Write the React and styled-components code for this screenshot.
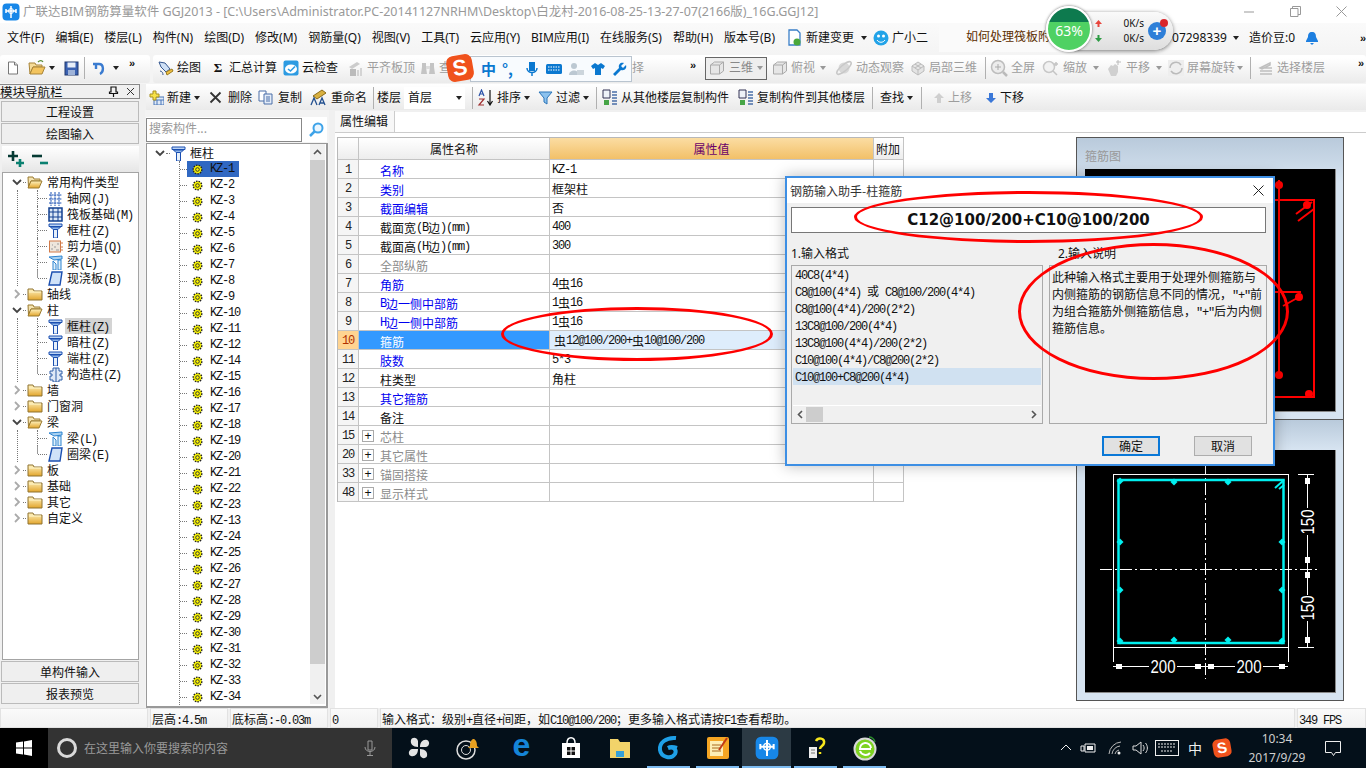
import React from 'react'
import styled, { createGlobalStyle } from 'styled-components'

const GlobalStyle = createGlobalStyle`
	html, body { margin: 0; padding: 0; background: #f0f0f0; }
	* { box-sizing: border-box; }
`

const uiFont = `"Noto Sans", "Noto Sans CJK SC", sans-serif`
const simFont = `"Noto Sans CJK SC", sans-serif`

const Screen = styled.div`
	position: relative;
	width: 1366px;
	height: 768px;
	overflow: hidden;
	display: flex;
	flex-direction: column;
	background: #f0f0f0;
	font: 12px/16px ${simFont};
	color: #111;
`

/* ---------- latin runs set narrow, like the bitmap font ---------- */
const Latin = styled.span`
	font-family: "Liberation Mono", monospace;
	font-size: 12px;
	line-height: 1;
	letter-spacing: -1.2px;
`
const Sim = ({ children }) =>
	String(children)
		.split(/([\x20-\x7e]+)/)
		.map((part, i) => (/^[\x20-\x7e]+$/.test(part) ? <Latin key={i}>{part}</Latin> : part))

/* ---------- icons ---------- */
const Ico = ({ s = 16, h, children }) => (
	<svg width={s} height={h || s} viewBox={`0 0 ${s} ${h || s}`} style={{ flex: 'none', display: 'block' }}>
		{children}
	</svg>
)

const ColumnIcon = () => (
	<Ico s={15}>
		<path d="M1 1h13v2.5H1z" fill="#bcd4f4" stroke="#1b4fb0" />
		<path d="M2.5 4h10l-2.5 2.5H5z" fill="#8fb6ea" stroke="#1b4fb0" />
		<path d="M5.5 6.5h4V15h-4z" fill="#e6f0fb" stroke="#1b4fb0" />
	</Ico>
)
const GearIcon = () => (
	<Ico s={11}>
		<circle cx="5.5" cy="5.5" r="4.3" fill="#f7f400" stroke="#222" strokeWidth="1.4" strokeDasharray="1.5 1.1" />
		<circle cx="5.5" cy="5.5" r="1.8" fill="#fff700" stroke="#333" />
	</Ico>
)
const FolderIcon = ({ open }) => (
	<Ico s={16}>
		<defs>
			<linearGradient id="fold" x1="0" y1="0" x2="0" y2="1">
				<stop offset="0" stopColor="#fff3c0" />
				<stop offset="1" stopColor="#e2a52c" />
			</linearGradient>
		</defs>
		{open ? (
			<>
				<path d="M1 3h5l1 2h6v2H4L1.5 13z" fill="#f5e4b0" stroke="#9a7a30" />
				<path d="M4 7h11l-3 7H1z" fill="url(#fold)" stroke="#9a7a30" />
			</>
		) : (
			<>
				<path d="M1 3h5l1 2h8v9H1z" fill="url(#fold)" stroke="#8f7330" />
				<path d="M2 6h12" stroke="#fff6cc" />
			</>
		)}
	</Ico>
)
const Chevron = ({ down }) => (
	<Ico s={12}>
		{down ? (
			<path d="M2 4l4 4 4-4" fill="none" stroke="#444" strokeWidth="1.8" />
		) : (
			<path d="M4 2l4 4-4 4" fill="none" stroke="#aaa" strokeWidth="1.8" />
		)}
	</Ico>
)
const GridIcon = () => (
	<Ico s={15}>
		<path d="M3 1v14M7 1v14M11 1v14M1 4h13M1 8h13M1 12h13" stroke="#1d52b4" strokeDasharray="2 .6" fill="none" />
	</Ico>
)
const RaftIcon = () => (
	<Ico s={15}>
		<rect x="1" y="1" width="13" height="13" fill="#dce8f6" stroke="#103f90" strokeWidth="1.5" />
		<path d="M5 1v13M10 1v13M1 5h13M1 10h13" stroke="#103f90" />
	</Ico>
)
const WallIcon = () => (
	<Ico s={15}>
		<rect x="1.5" y="2" width="11" height="11" fill="#eee6dc" stroke="#d27a48" />
		<path d="M3 10h2M6 8h2M8 11h3M4 6h1M9 5h2" stroke="#999" />
		<path d="M13 4h2M13 8h2M13 11h2" stroke="#d27a48" />
	</Ico>
)
const BeamIcon = () => (
	<Ico s={15}>
		<path d="M1 2l13-1v3L6 5z" fill="#a9d2f2" stroke="#2c83cf" />
		<path d="M5 6l3 3v6H5zM10 5h3v10h-3z" fill="#dff0fb" stroke="#2c83cf" />
	</Ico>
)
const SlabIcon = () => (
	<Ico s={15}>
		<path d="M4 1h10l-2 13H1z" fill="#cfe2f8" stroke="#1b4fb0" strokeWidth="1.4" />
	</Ico>
)
const StructIcon = () => (
	<Ico s={15}>
		<path d="M5 1h6v3h3v3h-2v2h2v4h-3v2H5v-2H2V9h2V7H2V4h3z" fill="#dfe9f6" stroke="#2f5fa8" />
		<path d="M8 1v14" stroke="#2f5fa8" />
	</Ico>
)
const PlusBox = styled.span`
	flex: none;
	width: 12px;
	height: 12px;
	margin: -2px 6px 0 3px;
	border: 1px solid #aaa;
	background: #fff;
	font: 12px/10px "Liberation Sans", sans-serif;
	text-align: center;
	color: #111;
`
const NewDocIcon = () => (
	<Ico s={14}>
		<path d="M2.5 1h6l3 3v9h-9z" fill="#fff" stroke="#777" />
		<path d="M8.5 1v3h3" fill="#ddd" stroke="#777" />
	</Ico>
)
const OpenIcon = () => (
	<Ico s={18}>
		<path d="M1 4h6l1 2h6v2H5l-3 7z" fill="#f5dc98" stroke="#a88438" />
		<path d="M5 8h12l-3 7H2z" fill="#f3c45e" stroke="#a88438" />
		<path d="M10 3c2-2 4-1.5 5 0" fill="none" stroke="#5a8f3a" strokeWidth="1.3" />
	</Ico>
)
const SaveIcon = () => (
	<Ico s={15}>
		<rect x="1" y="1" width="13" height="13" fill="#3b62b2" stroke="#20386f" />
		<rect x="3.5" y="1.5" width="8" height="5" fill="#e8eef8" />
		<rect x="4" y="9" width="7" height="5" fill="#9fb3d8" />
	</Ico>
)
const UndoIcon = () => (
	<Ico s={14}>
		<path d="M4 2v6M1 3h6c5 0 5 8 1 10" fill="none" stroke="#3a7bd0" strokeWidth="2.4" />
	</Ico>
)
const BrushIcon = () => (
	<Ico s={17}>
		<path d="M2 2l6 1 5 6-4 3-5-5z" fill="#cfe0f5" stroke="#35578f" />
		<path d="M9 12l6-3 1 2-6 4z" fill="#f0c040" stroke="#9a7a20" />
		<path d="M3 11c2 0 3 2 3 4" stroke="#35578f" fill="none" />
	</Ico>
)
const CloudCheckIcon = () => (
	<Ico s={16}>
		<rect x=".5" y=".5" width="15" height="15" rx="2" fill="#2d9be2" />
		<ellipse cx="8" cy="9" rx="6" ry="4.5" fill="#fff" />
		<path d="M5 9l2.5 2L12 6.5" fill="none" stroke="#2d9be2" strokeWidth="1.6" />
	</Ico>
)
const GrayBlocksIcon = () => (
	<Ico s={17}>
		<path d="M2 7l8-5 3 2-8 5z" fill="#ccc" />
		<path d="M3 9h6v7H3z" fill="#bbb" />
		<path d="M10 10h2v6h-2zM13 8h2v8h-2z" fill="#d4d4d4" />
	</Ico>
)
const BinocIcon = () => (
	<Ico s={16}>
		<path d="M2 3h4v4l1 7H1l1-7zM10 3h4v4l1 7H9l1-7z" fill="#c4c4c4" />
		<path d="M6 6h4v3H6z" fill="#ddd" />
	</Ico>
)
const CubeIcon = () => (
	<Ico s={16}>
		<path d="M1.5 5l4-3h9v9l-4 3h-9z" fill="#e6e6e6" stroke="#aaa" />
		<path d="M1.5 5h9v9M10.5 5l4-3" fill="none" stroke="#aaa" />
	</Ico>
)
const OrbitIcon = () => (
	<Ico s={18}>
		<circle cx="9" cy="9" r="5.5" fill="#d8d8d8" />
		<ellipse cx="9" cy="9" rx="9" ry="3" transform="rotate(-40 9 9)" fill="none" stroke="#c8c8c8" strokeWidth="1.5" />
	</Ico>
)
const PartCubeIcon = () => (
	<Ico s={16}>
		<path d="M2 6l6-4 6 4v5l-6 4-6-4z" fill="#e4e4e4" stroke="#bbb" />
		<path d="M2 6l6 4 6-4M8 10v5M5 4l6 4M5 8l6-4" fill="none" stroke="#bbb" />
	</Ico>
)
const ZoomGlassIcon = () => (
	<Ico s={18}>
		<circle cx="8" cy="8" r="6.5" fill="#ececec" stroke="#bdbdbd" strokeWidth="1.5" />
		<path d="M5 8h6M8 5v6" stroke="#aaa" />
		<path d="M13 13l4 4" stroke="#bbb" strokeWidth="2.5" />
	</Ico>
)
const ZoomPlainIcon = () => (
	<Ico s={18}>
		<circle cx="7" cy="8" r="5.5" fill="#f2f2f2" stroke="#c8c8c8" strokeWidth="1.5" />
		<path d="M11 12l4 4M14 3v4M12 5h4" stroke="#c4c4c4" strokeWidth="1.5" />
	</Ico>
)
const HandIcon = () => (
	<Ico s={18}>
		<path d="M3 10l3-4 2 1 2-2 3 2v6l-2 4H6z" fill="#d0d0d0" />
		<path d="M13 1v5M11 3h5" stroke="#bbb" />
	</Ico>
)
const RotateIcon = () => (
	<Ico s={18}>
		<rect x="1" y="1" width="16" height="16" fill="#eee" />
		<path d="M3 9a6 6 0 0 1 11-3M15 9a6 6 0 0 1-11 3" fill="none" stroke="#bbb" strokeWidth="1.5" />
	</Ico>
)
const FloorsIcon = () => (
	<Ico s={16}>
		<path d="M2 8l10-5v2L4 9zM2 8h12M2 11h12M2 14h12" stroke="#bfbfbf" strokeWidth="1.5" fill="none" />
	</Ico>
)
const NewItemIcon = () => (
	<Ico s={15}>
		<rect x="5" y="7" width="10" height="8" fill="#dfe9f6" stroke="#4a76b8" />
		<path d="M5 10h10M8 10v5M12 10v5" stroke="#4a76b8" />
		<path d="M1 4h3V1h3v3h3v3H7v3H4V7H1z" fill="#f7e24a" stroke="#a89020" />
	</Ico>
)
const CrossIcon = () => (
	<Ico s={13}>
		<path d="M1.5 1.5l10 10M11.5 1.5l-10 10" stroke="#333" strokeWidth="1.8" />
	</Ico>
)
const CopyIcon = () => (
	<Ico s={15}>
		<path d="M1 1h7v10H1z" fill="#fff" stroke="#4a6fa8" />
		<path d="M6 4h8v10H6z" fill="#e4ecf8" stroke="#4a6fa8" />
		<path d="M8 7h4M8 9h4M8 11h4" stroke="#4a6fa8" />
	</Ico>
)
const RenameIcon = () => (
	<Ico s={17}>
		<path d="M3 7l9-6 4 3-9 6z" fill="#d8b040" stroke="#8a6a18" />
		<path d="M1 16l3-7 3 7M9 16l3-7 3 7M10 14h4" fill="none" stroke="#23508f" strokeWidth="1.3" />
	</Ico>
)
const SortIcon = () => (
	<Ico s={17}>
		<path d="M2 7l2.5-6L7 7M3 5h3" fill="none" stroke="#2a52a8" strokeWidth="1.2" />
		<path d="M2 10h5l-5 6h5" fill="none" stroke="#a03030" strokeWidth="1.2" />
		<path d="M13 1v14M10.5 12l2.5 4 2.5-4" fill="none" stroke="#111" strokeWidth="1.2" />
	</Ico>
)
const FunnelIcon = () => (
	<Ico s={15}>
		<path d="M1 2h13L9 8v6l-3-2V8z" fill="#8cc2ee" stroke="#2a74b8" />
	</Ico>
)
const CopyFloorIcon = () => (
	<Ico s={17}>
		<path d="M2 1h7v8H2z" fill="#eef2f8" stroke="#335" />
		<path d="M3 11h5v5H3z" fill="#47a547" />
		<path d="M11 3h5M11 6h5M11 9h5M11 12h5M11 15h5" stroke="#4a6fa8" strokeWidth="1.5" />
	</Ico>
)
const ArrowUpIcon = ({ color }) => (
	<Ico s={12}>
		<path d="M6 1l5 5H8v5H4V6H1z" fill={color} />
	</Ico>
)
const ArrowDownIcon = ({ color }) => (
	<Ico s={12}>
		<path d="M6 11L1 6h3V1h4v5h3z" fill={color} />
	</Ico>
)
const MagnifierIcon = () => (
	<Ico s={16}>
		<circle cx="10" cy="6" r="4.5" fill="#eaf6ff" stroke="#3ea3e8" strokeWidth="2" />
		<path d="M6.5 9.5L2 14" stroke="#3ea3e8" strokeWidth="2.5" />
	</Ico>
)
const PinIcon = () => (
	<Ico s={11}>
		<path d="M3 1h5v5h1.5v1.5h-8V6H3zM5.500 7.5V11" fill="none" stroke="#111" strokeWidth="1.2" />
	</Ico>
)
const SmallX = () => (
	<Ico s={9}>
		<path d="M1 1l7 7M8 1L1 8" stroke="#333" />
	</Ico>
)
const ExpandAllIcon = () => (
	<Ico s={18}>
		<path d="M1 6h10M6 1v10" stroke="#053a33" strokeWidth="2.6" />
		<path d="M9 13h8M13 9v8" stroke="#0a8070" strokeWidth="2.6" />
	</Ico>
)
const CollapseAllIcon = () => (
	<Ico s={18}>
		<path d="M1 6h10" stroke="#053a33" strokeWidth="2.6" />
		<path d="M9 13h8" stroke="#0a8070" strokeWidth="2.6" />
	</Ico>
)
const AppLogo = ({ s = 18 }) => (
	<svg width={s} height={s} viewBox="0 0 18 18" style={{ flex: 'none', display: 'block' }}>
		<rect x=".5" y=".5" width="17" height="17" rx="4" fill="#1787e8" />
		<path d="M9 3v12M4 8h10M4 6v4M14 6v4" stroke="#fff" strokeWidth="1.5" fill="none" />
		<circle cx="9" cy="8" r="2.5" fill="none" stroke="#fff" />
	</svg>
)
const DocPlusIcon = () => (
	<Ico s={17}>
		<path d="M3 1h8l3 3v12H3z" fill="#fff" stroke="#3a7fc8" strokeWidth="1.3" />
		<circle cx="11" cy="13" r="3.5" fill="#4aa83a" />
	</Ico>
)
const MascotIcon = () => (
	<Ico s={16}>
		<circle cx="8" cy="8" r="7.5" fill="#22a3e8" />
		<circle cx="5.5" cy="6" r="1.5" fill="#fff" />
		<circle cx="10.5" cy="6" r="1.5" fill="#fff" />
		<path d="M4 10c2 3 6 3 8 0" stroke="#fff" fill="none" />
	</Ico>
)
const BellIcon = () => (
	<Ico s={14}>
		<path d="M7 1c3 0 4 2 4 5l2 4v1H1v-1l2-4c0-3 1-5 4-5z" fill="#1d7fe0" />
		<path d="M5 12h4l-2 2z" fill="#1d7fe0" />
	</Ico>
)

/* ---------- title bar ---------- */
const TitleBar = styled.div`
	height: 23px;
	flex: none;
	display: flex;
	align-items: center;
	padding-left: 2px;
	background: #fff;
`
const TitleText = styled.span`
	margin-left: 3px;
	font: 12.5px/23px ${uiFont};
	color: #999;
	white-space: nowrap;
`
const WinButtons = styled.div`
	margin-left: auto;
	margin-right: 2px;
	display: flex;
`
const WinButton = styled.div`
	width: 46px;
	height: 22px;
	display: flex;
	align-items: center;
	justify-content: center;
`

/* ---------- menu bar ---------- */
const MenuBar = styled.div`
	height: 31px;
	flex: none;
	display: flex;
	align-items: center;
	gap: 11px;
	padding: 0 0 2px 7px;
	background: linear-gradient(#fafafa, #f4f4f4);
	font: 12px/16px ${uiFont};
	white-space: nowrap;
`
const MenuIconItem = styled.span`
	display: flex;
	align-items: center;
	gap: 3px;
	margin-left: ${({ $ml }) => $ml || 0}px;
`
const Caret = styled.span`
	display: inline-block;
	flex: none;
	width: 0;
	height: 0;
	margin-left: ${({ $ml }) => $ml ?? 4}px;
	border: 3px solid transparent;
	border-top: 4px solid ${({ $dim }) => ($dim ? '#999' : '#222')};
	border-bottom: 0;
`
const NewsTab = styled.div`
	width: 222px;
	height: 29px;
	align-self: flex-end;
	padding: 6px 0 0 27px;
	background: #fafafa;
	border-radius: 3px 3px 0 0;
	color: #5c2e00;
	overflow: hidden;
`
const MoreMark = styled.span`
	font: bold 11px/12px "Liberation Sans", sans-serif;
	color: #111;
	align-self: flex-start;
	margin-top: ${({ $mt }) => $mt ?? 2}px;
	margin-left: ${({ $ml }) => $ml ?? 0}px;
`
const RightMenu = styled.div`
	flex: 1;
	display: flex;
	align-items: center;
	color: #111;
`
const CoinLabel = styled.span`
	margin-left: 10px;
`
const BellSlot = styled.span`
	margin-left: 10px;
	margin-right: auto;
`

/* ---------- first toolbar row ---------- */
const ToolRow = styled.div`
	height: 30px;
	flex: none;
	display: flex;
	align-items: center;
	gap: 3px;
	font: 12px/16px ${uiFont};
	white-space: nowrap;
	background: #f4f4f4;
`
const ToolStrip = styled.div`
	height: 28px;
	display: flex;
	align-items: center;
	flex: ${({ $w }) => ($w ? `0 0 ${$w}px` : 1)};
	padding: 0 0 2px ${({ $pl }) => $pl || 0}px;
	border-radius: 3px;
	background: linear-gradient(#ffffff 10%, #ebebeb);
`
const Tool = styled.span`
	display: flex;
	align-items: center;
	flex: none;
	gap: ${({ $gap }) => $gap ?? 3}px;
	width: ${({ $w }) => $w}px;
	color: ${({ $dim }) => ($dim ? '#9d9d9d' : '#111')};
`
const Sigma = styled.span`
	width: 16px;
	text-align: center;
	font: bold 13px/16px "Liberation Serif", serif;
`
const ToolSep = styled.span`
	flex: none;
	width: 1px;
	height: 22px;
	margin: 0 ${({ $mr }) => $mr ?? 4}px 0 ${({ $ml }) => $ml ?? 0}px;
	background: #b0b0b0;
`
const ViewSelect = styled.span`
	flex: none;
	display: flex;
	align-items: center;
	gap: 4px;
	width: 62px;
	height: 23px;
	margin-right: 5px;
	padding-left: 3px;
	border: 1px solid #666;
	background: #eee;
	color: #888;
`

/* ---------- workspace ---------- */
const Workspace = styled.div`
	height: 624px;
	flex: none;
	display: flex;
`
const NavPanel = styled.div`
	width: 140px;
	flex: none;
	margin-right: 5px;
	display: flex;
	flex-direction: column;
	background: #f0f0f0;
`
const NavHeader = styled.div`
	height: 15px;
	flex: none;
	display: flex;
	align-items: center;
	font: 12.5px/14px ${simFont};
	border: 1px solid #888;
	border-left: 0;
	background: #f0f0f0;
	margin-bottom: 2px;
`
const NavHeaderIcons = styled.span`
	margin-left: auto;
	margin-right: 4px;
	display: flex;
	align-items: center;
	gap: 7px;
`
const NavButton = styled.div`
	height: 21px;
	flex: none;
	margin: 0 1px 1px;
	width: 138px;
	border: 1px solid #bbb;
	background: #efefef;
	text-align: center;
	line-height: 19px;
`
const NavTools = styled.div`
	height: 26px;
	flex: none;
	margin: 1px 1px 0 2px;
	display: flex;
	align-items: center;
	gap: 6px;
	padding-left: 5px;
	background: linear-gradient(#fff, #e6e6e6);
`
const NavTree = styled.div`
	height: 488px;
	flex: none;
	margin: 0 1px 1px 2px;
	padding-top: 1px;
	border: 1px solid #a4a4a4;
	background: #fff;
	overflow: hidden;
`
const TreeRow = styled.div`
	height: 16px;
	display: flex;
	align-items: center;
	white-space: nowrap;
`
const Dots = styled.span`
	flex: none;
	width: ${({ $w }) => $w}px;
	margin-right: ${({ $mr }) => $mr || 0}px;
	border-top: 1px dotted #777;
`
const FolderRow = styled(TreeRow)`
	padding-left: 8px;
`
const FolderLabel = styled.span`
	margin-left: 4px;
`
const KidsBox = styled.div`
	margin-left: 14px;
	padding-left: 19px;
	border-left: 1px dotted #777;
`
const KidRow = styled(TreeRow)`
	border-left: 1px dotted #777;
	&:last-child {
		border-left: 0;
		padding-left: 1px;
		background: linear-gradient(#999, #999) no-repeat 0 0 / 1px 8px;
	}
`
const KidLabel = styled.span`
	margin-left: 2px;
	padding: 0 3px 0 2px;
	background: ${({ $on }) => ($on ? '#d4d4d4' : 'transparent')};
`

/* ---------- component list ---------- */
const MainArea = styled.div`
	flex: 1;
	min-width: 0;
	display: flex;
	flex-direction: column;
`
const ItemToolbar = styled.div`
	height: 26px;
	flex: none;
	margin-left: 1px;
	display: flex;
	align-items: center;
	padding: 1px 0 0 3px;
	font: 12px/16px ${uiFont};
	white-space: nowrap;
	background: linear-gradient(#fff, #eaeaea);
`
const FloorSelect = styled.span`
	flex: none;
	display: flex;
	align-items: center;
	justify-content: space-between;
	width: 61px;
	height: 22px;
	margin: 0 7px 0 3px;
	padding: 0 3px 0 4px;
	background: #fff;
`
const Lower = styled.div`
	flex: 1;
	min-height: 0;
	display: flex;
`
const ListPanel = styled.div`
	width: 184px;
	flex: none;
	margin-right: 6px;
	padding: 7px 0 0 1px;
	display: flex;
	flex-direction: column;
	background: #f3f3f3;
`
const SearchRow = styled.div`
	height: 25px;
	flex: none;
	display: flex;
	align-items: center;
	gap: 6px;
	margin-bottom: 1px;
	background: #fff;
	margin-right: 2px;
`
const SearchBox = styled.div`
	width: 156px;
	height: 24px;
	border: 1px solid #888;
	padding-left: 2px;
	line-height: 18px;
	color: #999;
	font-size: 12px;
`
const ListBody = styled.div`
	flex: 1;
	min-height: 0;
	display: flex;
	border: 1px solid #999;
	border-width: 1px 2px 2px 1px;
	background: #fff;
	margin-right: 1px;
	overflow: hidden;
`
const ListTree = styled.div`
	flex: 1;
	min-width: 0;
	padding: 1px 0 0 7px;
`
const ListItems = styled.div`
	margin-left: 25px;
	border-left: 1px dotted #777;
`
const ListItem = styled(TreeRow)`
	padding-left: 0;
`
const ListLabel = styled.span`
	display: flex;
	align-items: center;
	height: 16px;
	padding: 0 5px 0 5px;
	gap: 7px;
	background: ${({ $on }) => ($on ? '#3068c2' : 'transparent')};
	color: #111;
`
const ScrollBar = styled.div`
	width: 15px;
	flex: none;
	margin-right: 1px;
	margin-bottom: 2px;
	display: flex;
	flex-direction: column;
	background: #f0f0f0;
`
const ScrollArrow = styled.div`
	height: 16px;
	flex: none;
	display: flex;
	align-items: center;
	justify-content: center;
`
const ScrollThumb = styled.div`
	height: 504px;
	flex: none;
	background: #cdcdcd;
`
const ScrollTrack = styled.div`
	flex: 1;
`

/* ---------- property panel ---------- */
const PropPanel = styled.div`
	flex: 1;
	min-width: 0;
	display: flex;
	flex-direction: column;
	background: #fff;
`
const TabStrip = styled.div`
	height: 23px;
	flex: none;
	display: flex;
	align-items: flex-end;
	border-bottom: 1px solid #ccc;
	background: linear-gradient(#f0f0f0 2px, #fff 2px);
`
const Tab = styled.div`
	width: 60px;
	height: 21px;
	padding-left: 5px;
	line-height: 20px;
	background: #f7f7f7;
	border-right: 1px solid #ccc;
	font-size: 12px;
`
const PropBody = styled.div`
	flex: 1;
	min-height: 0;
	display: flex;
	align-items: flex-start;
	padding: 4px 22px 0 2px;
`
const Grid = styled.div`
	width: 567px;
	flex: none;
	border-left: 1px solid #b8b8b8;
	border-top: 1px solid #b8b8b8;
`
const GridRow = styled.div`
	height: ${({ $h }) => $h || 19}px;
	display: grid;
	grid-template-columns: 21px 191px 324px 30px;
`
const Cell = styled.div`
	display: flex;
	align-items: center;
	border-right: 1px solid #c4c4c4;
	border-bottom: 1px solid #c4c4c4;
	padding: 2px 0 0 2px;
	overflow: hidden;
	white-space: nowrap;
`
const RowNum = styled(Cell)`
	justify-content: center;
	padding: 2px 0 0;
	background: ${({ $on }) => ($on ? '#ffd491' : '#f5f5f5')};
	color: ${({ $on }) => ($on ? '#b03000' : '#222')};
`
const NameCell = styled(Cell)`
	padding: 3px 0 0 ${({ $tree }) => ($tree ? 0 : 21)}px;
	color: ${({ $tone }) => ({ link: '#0000f0', dim: '#8c8c8c', on: '#fff' }[$tone] || '#111')};
	background: ${({ $on }) => ($on ? '#3399ff' : '#fff')};
`
const ValueCell = styled(Cell)`
	padding-left: ${({ $on }) => ($on ? 4 : 2)}px;
	background: ${({ $on }) => ($on ? '#deedfc' : '#fff')};
`
const HeadCell = styled(Cell)`
	justify-content: ${({ $left }) => ($left ? 'flex-start' : 'center')};
	padding: 1px 0 0 ${({ $left }) => ($left ? 2 : 0)}px;
	background: ${({ $hot }) => ($hot ? 'linear-gradient(#fbdda3, #f2c068)' : 'linear-gradient(#fff, #ededed)')};
	color: ${({ $hot }) => ($hot ? '#6a006a' : '#111')};
`
const Preview = styled.div`
	width: 268px;
	height: 564px;
	flex: none;
	margin-left: auto;
	border: 1px solid #555;
	display: flex;
	flex-direction: column;
`
const PreviewPane = styled.div`
	height: 281px;
	flex: none;
	padding: 9px 8px 0;
	background: linear-gradient(#b9cadb, #d7e4f1 45px);
	& + & {
		border-top: 1px solid #555;
		padding-top: 30px;
		background: linear-gradient(#b9cadb, #d7e4f1 30px);
	}
`
const PaneTitle = styled.div`
	height: 22px;
	color: #999;
	line-height: 18px;
`
const CadBox = styled.div`
	width: 251px;
	height: 243px;
	background: #000;
	border-right: 1px solid #888;
	border-bottom: 1px solid #888;
`

/* ---------- status bar ---------- */
const StatusBar = styled.div`
	height: 20px;
	flex: none;
	display: flex;
	gap: 2px;
	background: #f0f0f0;
	white-space: nowrap;
`
const StatusCell = styled.div`
	width: ${({ $w }) => ($w ? `${$w}px` : 'auto')};
	flex: ${({ $w }) => ($w ? 'none' : 1)};
	padding-left: 1px;
	line-height: 19px;
	background: linear-gradient(#fafafa, #f2f2f2);
	border: 1px solid #e2e2e2;
`

/* ---------- taskbar ---------- */
const Taskbar = styled.div`
	height: 40px;
	flex: none;
	display: flex;
	align-items: stretch;
	background: #04101a;
	color: #ddd;
`
const StartButton = styled.div`
	width: 48px;
	flex: none;
	display: flex;
	align-items: center;
	justify-content: center;
	background: #000;
`
const TaskSearch = styled.div`
	width: 344px;
	flex: none;
	display: flex;
	align-items: center;
	padding-left: 9px;
	background: #333;
	color: #9a9a9a;
	font: 12px/16px ${simFont};
`
const CortanaRing = styled.span`
	flex: none;
	width: 20px;
	height: 20px;
	margin-right: 7px;
	border: 3px solid #d9d9d9;
	border-radius: 50%;
`
const MicSlot = styled.span`
	margin-left: auto;
	margin-right: 14px;
`
const TaskApps = styled.div`
	display: flex;
	padding-left: 2px;
`
const TaskApp = styled.div`
	position: relative;
	width: ${({ $w }) => $w || 49}px;
	margin-right: ${({ $gap }) => $gap || 0}px;
	display: flex;
	align-items: center;
	justify-content: center;
	background: ${({ $active }) => ($active ? '#2c3a44' : 'transparent')};
	&::after {
		content: '';
		display: ${({ $running }) => ($running ? 'block' : 'none')};
		position: absolute;
		left: ${({ $active }) => ($active ? 0 : 3)}px;
		right: ${({ $active }) => ($active ? 0 : 3)}px;
		bottom: 0;
		height: 2px;
		background: #7dbbf0;
	}
`
const Tray = styled.div`
	margin-left: auto;
	display: flex;
	align-items: center;
	height: 100%;
`
const TraySlot = styled.span`
	flex: none;
	width: ${({ $w }) => $w}px;
	display: flex;
	align-items: center;
	justify-content: center;
	color: #eee;
	font: 14px/16px ${simFont};
`
const Clock = styled.div`
	flex: none;
	width: 66px;
	margin-left: 6px;
	text-align: center;
	font: 12px/19px ${uiFont};
	color: #cfcfcf;
`
const NoticeSlot = styled.span`
	flex: none;
	width: 46px;
	margin-right: 10px;
	display: flex;
	justify-content: center;
`
const SogouTile = styled.span`
	display: block;
	width: ${({ $s }) => $s}px;
	height: ${({ $s }) => $s}px;
	border-radius: ${({ $s }) => Math.round($s / 4)}px;
	transform: rotate(-10deg);
	background: #f0521c;
	color: #fff;
	text-align: center;
	font: bold ${({ $s }) => Math.round($s * 0.85)}px/${({ $s }) => $s}px "Liberation Sans", sans-serif;
`
const WinEdge = styled.span`
	font: bold 32px/32px "Liberation Sans", sans-serif;
	color: #1585d8;
	margin-top: -6px;
`

/* ---------- floating overlays ---------- */
const Ring = styled.div`
	position: absolute;
	left: ${({ $x }) => $x}px;
	top: ${({ $y }) => $y}px;
	width: ${({ $w }) => $w}px;
	height: ${({ $h }) => $h}px;
	border: 3px solid #f00;
	border-radius: 50%;
	pointer-events: none;
`
const ImeBar = styled.div`
	position: absolute;
	left: 470px;
	top: 56px;
	width: 162px;
	height: 26px;
	display: flex;
	align-items: center;
	gap: 6px;
	padding-left: 10px;
	background: #f8fbfe;
	border: 1px solid #b9c4cf;
	color: #0a78d0;
	font: bold 15px/20px ${simFont};
`
const ImePunct = styled.span`
	width: 12px;
	margin-right: 4px;
`
const ImeLogo = styled.div`
	position: absolute;
	left: 447px;
	top: 55px;
`
const NetPill = styled.div`
	position: absolute;
	left: 1060px;
	top: 12px;
	width: 113px;
	height: 38px;
	padding-left: 34px;
	display: flex;
	align-items: center;
	justify-content: space-between;
	padding-right: 7px;
	border-radius: 19px;
	background: linear-gradient(#fafafa, #dedede);
	box-shadow: 0 1px 4px #0008;
	font: 10px/15px ${uiFont};
`
const NetRates = styled.div`
	flex: 1;
	display: grid;
	grid-template-columns: 1fr auto;
	align-items: center;
	margin-right: 4px;
`
const NetBall = styled.div`
	position: absolute;
	left: 1046px;
	top: 6px;
	width: 46px;
	height: 46px;
	border-radius: 50%;
	border: 2px solid #fff;
	box-shadow: 0 0 3px #0009;
	background: linear-gradient(#0d7a4e 0 34%, #4fd163 34%);
	color: #fff;
	text-align: center;
	font: 14px/46px ${uiFont};
`
const NetPlus = styled.div`
	position: relative;
	flex: none;
	width: 18px;
	height: 18px;
	border-radius: 50%;
	background: #2e7fd8;
	color: #fff;
	text-align: center;
	font: bold 15px/17px "Liberation Sans", sans-serif;
	&::after {
		content: '';
		position: absolute;
		right: -2px;
		top: -3px;
		width: 8px;
		height: 8px;
		border-radius: 50%;
		background: #d8262c;
	}
`
const Dialog = styled.div`
	position: absolute;
	left: 785px;
	top: 176px;
	width: 490px;
	height: 290px;
	display: flex;
	flex-direction: column;
	background: #f0f0f0;
	border: 2px solid #3d8fe4;
	box-shadow: 0 0 14px #0004;
`
const DialogTitle = styled.div`
	height: 25px;
	flex: none;
	display: flex;
	align-items: center;
	justify-content: space-between;
	padding: 0 9px 0 3px;
	background: #fff;
	color: #333;
`
const DialogBody = styled.div`
	flex: 1;
	padding: 4px 7px 0 4px;
	display: flex;
	flex-direction: column;
`
const FormulaBox = styled.div`
	height: 26px;
	flex: none;
	border: 1px solid #777;
	background: #fff;
	text-align: center;
	color: #111;
	font: bold 15px/25px "DejaVu Sans", sans-serif;
`
const PaneGrid = styled.div`
	display: grid;
	grid-template-columns: 252px 218px;
	column-gap: 6px;
	margin-top: 11px;
`
const PaneLabel = styled.div`
	height: 21px;
	line-height: 18px;
	padding-left: ${({ $pl }) => $pl || 0}px;
`
const LabelNum = styled.span`
	font-family: ${uiFont};
`
const FormatList = styled.div`
	height: 159px;
	display: flex;
	flex-direction: column;
	padding: 0 1px;
	border: 1px solid #aaa;
`
const FormatItem = styled.div`
	height: 17px;
	flex: none;
	padding-left: 2px;
	line-height: 16px;
	white-space: nowrap;
	background: ${({ $on }) => ($on ? '#d0e1f1' : 'transparent')};
`
const HScroll = styled.div`
	margin-top: auto;
	height: 18px;
	flex: none;
	display: flex;
	align-items: center;
	justify-content: space-between;
	padding: 0 3px;
	border-top: 1px solid #fff;
`
const HThumb = styled.span`
	width: 17px;
	height: 15px;
	margin-right: auto;
	margin-left: 1px;
	background: #cdcdcd;
`
const DescBox = styled.div`
	height: 159px;
	padding: 2px 2px 0 2px;
	border: 1px solid #aaa;
	line-height: 17px;
	white-space: nowrap;
`
const DescLine = styled.div`
	height: 17px;
`
const DialogActions = styled.div`
	margin-top: 12px;
	display: flex;
	justify-content: flex-end;
	gap: 34px;
	padding-right: 14px;
`
const DialogButton = styled.div`
	width: 58px;
	height: 20px;
	text-align: center;
	line-height: ${({ $primary }) => ($primary ? 16 : 18)}px;
	background: #e1e1e1;
	border: ${({ $primary }) => ($primary ? '2px solid #0a78d7' : '1px solid #adadad')};
`

/* ---------- data ---------- */
const navTree = [
	{
		label: '常用构件类型',
		open: true,
		kids: [
			['轴网(J)', GridIcon],
			['筏板基础(M)', RaftIcon],
			['框柱(Z)', ColumnIcon],
			['剪力墙(Q)', WallIcon],
			['梁(L)', BeamIcon],
			['现浇板(B)', SlabIcon],
		],
	},
	{ label: '轴线' },
	{
		label: '柱',
		open: true,
		kids: [
			['框柱(Z)', ColumnIcon, true],
			['暗柱(Z)', ColumnIcon],
			['端柱(Z)', ColumnIcon],
			['构造柱(Z)', StructIcon],
		],
	},
	{ label: '墙' },
	{ label: '门窗洞' },
	{
		label: '梁',
		open: true,
		kids: [
			['梁(L)', BeamIcon],
			['圈梁(E)', SlabIcon],
		],
	},
	{ label: '板' },
	{ label: '基础' },
	{ label: '其它' },
	{ label: '自定义' },
]

const kzList = [
	1, 2, 3, 4, 5, 6, 7, 8, 9, 10, 11, 12, 14, 15, 16, 17, 18, 19, 20, 21, 22, 23, 13, 24, 25, 26, 27, 28, 29, 30, 31, 32,
	33, 34,
]

const propRows = [
	[1, '名称', 'link', 'KZ-1'],
	[2, '类别', 'link', '框架柱'],
	[3, '截面编辑', 'link', '否'],
	[4, '截面宽(B边)(mm)', '', '400'],
	[5, '截面高(H边)(mm)', '', '300'],
	[6, '全部纵筋', 'dim', ''],
	[7, '角筋', 'link', '4 虫16'],
	[8, 'B边一侧中部筋', 'link', '1 虫16'],
	[9, 'H边一侧中部筋', 'link', '1 虫16'],
	[10, '箍筋', 'on', '虫12@100/200+虫10@100/200'],
	[11, '肢数', 'link', '5*3'],
	[12, '柱类型', '', '角柱'],
	[13, '其它箍筋', 'link', ''],
	[14, '备注', '', ''],
	[15, '芯柱', 'tree', ''],
	[20, '其它属性', 'tree', ''],
	[33, '锚固搭接', 'tree', ''],
	[48, '显示样式', 'tree', ''],
]

const formats = [
	'40C8(4*4)',
	'C8@100(4*4) 或 C8@100/200(4*4)',
	'C8@100(4*4)/200(2*2)',
	'13C8@100/200(4*4)',
	'13C8@100(4*4)/200(2*2)',
	'C10@100(4*4)/C8@200(2*2)',
	'C10@100+C8@200(4*4)',
]

const descLines = [
	'此种输入格式主要用于处理外侧箍筋与',
	'内侧箍筋的钢筋信息不同的情况\uFF0C"+"前',
	'为组合箍筋外侧箍筋信息\uFF0C"+"后为内侧',
	'箍筋信息。',
]

const statusHint = '输入格式\uFF1A级别+直径+间距\uFF0C如C10@100/200\uFF1B更多输入格式请按F1查看帮助。'

const menuItems = [
	'文件(F)', '编辑(E)', '楼层(L)', '构件(N)', '绘图(D)', '修改(M)', '钢筋量(Q)',
	'视图(V)', '工具(T)', '云应用(Y)', 'BIM应用(I)', '在线服务(S)', '帮助(H)', '版本号(B)',
]

/* ---------- sections ---------- */
const NavTreeList = () => (
	<NavTree>
		{navTree.map(folder => (
			<React.Fragment key={folder.label}>
				<FolderRow>
					<Chevron down={folder.open} />
					<Dots $w={3} $mr={1} />
					<FolderIcon open={folder.open} />
					<FolderLabel>{folder.label}</FolderLabel>
				</FolderRow>
				{folder.kids && (
					<KidsBox>
						{folder.kids.map(([label, Icon, on]) => (
							<KidRow key={label + folder.label}>
								<Dots $w={9} $mr={1} />
								<Icon />
								<KidLabel $on={on}>
									<Sim>{label}</Sim>
								</KidLabel>
							</KidRow>
						))}
					</KidsBox>
				)}
			</React.Fragment>
		))}
	</NavTree>
)

const ComponentList = () => (
	<ListPanel>
		<SearchRow>
			<SearchBox>搜索构件...</SearchBox>
			<MagnifierIcon />
		</SearchRow>
		<ListBody>
			<ListTree>
				<TreeRow>
					<Chevron down />
					<Dots $w={4} $mr={1} />
					<ColumnIcon />
					<FolderLabel>框柱</FolderLabel>
				</TreeRow>
				<ListItems>
					{kzList.map((n, i) => (
						<ListItem key={n}>
							<Dots $w={7} />
							<ListLabel $on={i === 0}>
								<GearIcon />
								<Sim>{`KZ-${n}`}</Sim>
							</ListLabel>
						</ListItem>
					))}
				</ListItems>
			</ListTree>
			<ScrollBar>
				<ScrollArrow>
					<Ico s={9}>
						<path d="M1 6l3.5-3.5L8 6" fill="none" stroke="#555" strokeWidth="1.6" />
					</Ico>
				</ScrollArrow>
				<ScrollThumb />
				<ScrollTrack />
				<ScrollArrow>
					<Ico s={9}>
						<path d="M1 3l3.5 3.5L8 3" fill="none" stroke="#555" strokeWidth="1.6" />
					</Ico>
				</ScrollArrow>
			</ScrollBar>
		</ListBody>
	</ListPanel>
)

const PropGrid = () => (
	<Grid>
		<GridRow $h={22}>
			<HeadCell />
			<HeadCell>属性名称</HeadCell>
			<HeadCell $hot>属性值</HeadCell>
			<HeadCell $left>附加</HeadCell>
		</GridRow>
		{propRows.map(([num, name, tone, value]) => {
			const on = tone === 'on'
			const tree = tone === 'tree'
			return (
				<GridRow key={num}>
					<RowNum $on={on}>
						<Sim>{num}</Sim>
					</RowNum>
					<NameCell $tone={tree ? 'dim' : tone} $on={on} $tree={tree}>
						{tree && <PlusBox>+</PlusBox>}
						<Sim>{name}</Sim>
					</NameCell>
					<ValueCell $on={on}>
						<Sim>{value}</Sim>
					</ValueCell>
					<Cell />
				</GridRow>
			)
		})}
	</Grid>
)

const StirrupTop = () => (
	<svg width="251" height="243" viewBox="0 0 251 243" style={{ display: 'block' }}>
		<g stroke="#f00" strokeWidth="2" fill="none">
			<rect x="30" y="31" width="199" height="197" />
			<path d="M194 11v198M190 123h26M214 128l-16 9M227 33l-16 12M229 40l-16 12" />
		</g>
		<g fill="#f00">
			<circle cx="194" cy="16" r="4" />
			<circle cx="194" cy="206" r="4" />
			<circle cx="222" cy="36" r="4" />
			<circle cx="214" cy="128" r="4" />
			<circle cx="224" cy="225" r="4" />
		</g>
	</svg>
)

const StirrupSection = () => {
	const dots = [
		[35, 31], [89, 32], [143, 32],
		[35, 92], [35, 140], [197, 92], [197, 140],
		[35, 191], [89, 190], [143, 190], [197, 191],
	]
	const hDimMarks = [34, 113, 126, 197]
	const vDimMarks = [31, 110, 125, 190]
	return (
		<svg width="251" height="243" viewBox="0 0 251 243" style={{ display: 'block' }}>
			<rect x="28.5" y="24.5" width="175" height="173" fill="none" stroke="#fff" />
			<path d="M120.5 13v216M15 119.5h219" stroke="#fff" strokeDasharray="12 3 2 3" />
			<rect x="33.5" y="30" width="165" height="163" fill="none" stroke="#00f0f0" strokeWidth="2.5" />
			<path d="M199 30l-9 8M199 35l-5 4" stroke="#00f0f0" strokeWidth="2" />
			{dots.map(([x, y]) => (
				<rect key={`${x}-${y}`} x={x - 2.5} y={y - 2.5} width="5" height="5" fill="#00f0f0" transform={`rotate(45 ${x} ${y})`} />
			))}
			<g stroke="#fff" fill="none">
				<path d="M222.5 24v174M213 24.5h16M213 197.5h16" />
				<path d="M28.5 188v24M203.5 188v24M28 216.5h175" />
			</g>
			<g fill="#fff">
				{vDimMarks.map(y => (
					<rect key={y} x="220" y={y - 3} width="5" height="6" />
				))}
				{hDimMarks.map(x => (
					<rect key={x} x={x - 3} y="214" width="6" height="5" />
				))}
			</g>
			<g fill="#000">
				<rect x="214" y="58" width="16" height="27" />
				<rect x="214" y="145" width="16" height="26" />
				<rect x="64" y="208" width="28" height="16" />
				<rect x="150" y="208" width="28" height="16" />
			</g>
			<g fill="#fff" fontFamily="Liberation Sans, sans-serif" fontSize="18" textAnchor="middle">
				<text x="78" y="222.5" textLength="25" lengthAdjust="spacingAndGlyphs">200</text>
				<text x="164" y="222.5" textLength="25" lengthAdjust="spacingAndGlyphs">200</text>
				<text transform="translate(228.5 72) rotate(-90)" textLength="25" lengthAdjust="spacingAndGlyphs">150</text>
				<text transform="translate(228.5 158) rotate(-90)" textLength="25" lengthAdjust="spacingAndGlyphs">150</text>
			</g>
		</svg>
	)
}

const TaskbarIcons = {
	pin: (
		<Ico s={24}>
			<path d="M11 11C6 11 3 8 4 4c1-3 6-3 7 1zM13 11c0-5 3-8 7-7 3 1 3 6-1 7zM13 13c5 0 8 3 7 7-1 3-6 3-7-1zM11 13c0 5-3 8-7 7-3-1-3-6 1-7z" fill="#e4e4e4" />
		</Ico>
	),
	swirl: (
		<Ico s={28}>
			<circle cx="12" cy="16" r="9" fill="none" stroke="#ddd" strokeWidth="1.5" />
			<circle cx="12" cy="16" r="4.5" fill="none" stroke="#ddd" />
			<path d="M16 12c0-5 2-7 3.5-7S23 7 23 12l2 2H14z" fill="#e8a020" />
		</Ico>
	),
	store: (
		<Ico s={24}>
			<path d="M3 7h18v15H3z" fill="#fff" />
			<path d="M8 7c0-7 8-7 8 0" fill="none" stroke="#fff" strokeWidth="1.5" />
			<path d="M8 11h3.5v3.5H8zM12.5 11H16v3.5h-3.5zM8 15.5h3.5V19H8zM12.5 15.5H16V19h-3.5z" fill="#111" />
		</Ico>
	),
	explorer: (
		<Ico s={24}>
			<path d="M2 3h8l2 3h10v16H2z" fill="#f2d36a" />
			<path d="M8 15h8v6H8z" fill="#36a0d8" />
		</Ico>
	),
	glodon: (
		<Ico s={26}>
			<path d="M20 3C10 2 3 8 4 15c1 7 11 10 15 4 2-4-1-8-7-6M12 13c3-2 6-1 9 0" fill="none" stroke="#1ea0e8" strokeWidth="4" />
		</Ico>
	),
	note: (
		<Ico s={24}>
			<rect x="1" y="1" width="22" height="22" rx="2" fill="#f5a623" />
			<rect x="4" y="5" width="13" height="15" fill="#fdeeb5" />
			<path d="M6 9h9M6 12h9M6 15h9" stroke="#a86a20" />
			<path d="M21 2l-8 12" stroke="#c03a18" strokeWidth="2" />
		</Ico>
	),
	help: (
		<Ico s={24}>
			<path d="M5 11h8v11H5z" fill="#eee" />
			<path d="M7 14h4M7 17h4" stroke="#777" />
			<path d="M12 5c2-4 9-3 8 2-.5 3-4 3-4 6M16 16v2" fill="none" stroke="#f8e71c" strokeWidth="2.5" />
		</Ico>
	),
	green: (
		<Ico s={26}>
			<circle cx="13" cy="14" r="10.5" fill="#7ed321" stroke="#d8d8d8" strokeWidth="2" />
			<path d="M7 14h12M8 14a5.5 5.5 0 0 1 11-1M18 18a6 6 0 0 1-10-2" stroke="#fff" strokeWidth="2" fill="none" />
			<path d="M17 2c3 0 5 2 6 5" stroke="#2a8a2a" fill="none" strokeWidth="1.5" />
		</Ico>
	),
}

const App = () => (
	<Screen>
		<GlobalStyle />
		<TitleBar>
			<AppLogo />
			<TitleText>广联达BIM钢筋算量软件 GGJ2013 - [C:\Users\Administrator.PC-20141127NRHM\Desktop\白龙村-2016-08-25-13-27-07(2166版)_16G.GGJ12]</TitleText>
			<WinButtons>
				<WinButton>
					<Ico s={11}><path d="M0 6h10" stroke="#999" /></Ico>
				</WinButton>
				<WinButton>
					<Ico s={11}><path d="M.5 2.5h7.5v8H.5zM2.5 2.5V.5h8v8H8" fill="none" stroke="#999" /></Ico>
				</WinButton>
				<WinButton>
					<Ico s={11}><path d="M.5.5l10 10M10.5.5l-10 10" stroke="#999" /></Ico>
				</WinButton>
			</WinButtons>
		</TitleBar>

		<MenuBar>
			{menuItems.map(item => (
				<span key={item}>{item}</span>
			))}
			<MenuIconItem>
				<DocPlusIcon />
				新建变更
				<Caret />
			</MenuIconItem>
			<MenuIconItem $ml={-5}>
				<MascotIcon />
				广小二
			</MenuIconItem>
			<NewsTab>如何处理筏板附</NewsTab>
			<RightMenu>
				<span>07298339</span>
				<Caret $ml={6} />
				<CoinLabel>造价豆:0</CoinLabel>
				<BellSlot>
					<BellIcon />
				</BellSlot>
				<MoreMark>»</MoreMark>
			</RightMenu>
		</MenuBar>

		<ToolRow>
			<ToolStrip $w={150} $pl={6}>
				<Tool $w={22}><NewDocIcon /></Tool>
				<Tool $w={36}><OpenIcon /><Caret $ml={0} /></Tool>
				<Tool $w={20}><SaveIcon /></Tool>
				<ToolSep $ml={0} $mr={7} />
				<Tool $w={34}><UndoIcon /><Caret $ml={4} /></Tool>
				<MoreMark $ml={3}>»</MoreMark>
			</ToolStrip>
			<ToolStrip $pl={4}>
				<Tool $w={53}><BrushIcon />绘图</Tool>
				<Tool $w={73}><Sigma>Σ</Sigma>汇总计算</Tool>
				<Tool $w={64}><CloudCheckIcon />云检查</Tool>
				<Tool $w={73} $dim><GrayBlocksIcon />平齐板顶</Tool>
				<Tool $w={200} $dim><BinocIcon />查找</Tool>
				<Tool $w={70} $dim>选择</Tool>
				<Tool $w={15}><MoreMark $mt={-6}>»</MoreMark></Tool>
				<ViewSelect><CubeIcon />三维<Caret $ml={0} $dim /></ViewSelect>
				<Tool $w={63} $dim><CubeIcon />俯视<Caret $ml={2} $dim /></Tool>
				<Tool $w={75} $dim><OrbitIcon />动态观察</Tool>
				<Tool $w={75} $dim><PartCubeIcon />局部三维</Tool>
				<ToolSep />
				<Tool $w={52} $dim><ZoomGlassIcon />全屏</Tool>
				<Tool $w={63} $dim><ZoomPlainIcon />缩放<Caret $ml={3} $dim /></Tool>
				<Tool $w={62} $dim><HandIcon />平移<Caret $ml={3} $dim /></Tool>
				<Tool $w={83} $dim $gap={2}><RotateIcon />屏幕旋转<Caret $ml={0} $dim /></Tool>
				<ToolSep $mr={7} />
				<Tool $w={100} $dim><FloorsIcon />选择楼层</Tool>
				<MoreMark>»</MoreMark>
			</ToolStrip>
		</ToolRow>

		<Workspace>
			<NavPanel>
				<NavHeader>
					模块导航栏
					<NavHeaderIcons>
						<PinIcon />
						<SmallX />
					</NavHeaderIcons>
				</NavHeader>
				<NavButton>工程设置</NavButton>
				<NavButton>绘图输入</NavButton>
				<NavTools>
					<ExpandAllIcon />
					<CollapseAllIcon />
				</NavTools>
				<NavTreeList />
				<NavButton>单构件输入</NavButton>
				<NavButton>报表预览</NavButton>
			</NavPanel>

			<MainArea>
				<ItemToolbar>
					<Tool $w={60}><NewItemIcon />新建<Caret $ml={0} /></Tool>
					<Tool $w={49} $gap={6}><CrossIcon />删除</Tool>
					<Tool $w={52} $gap={5}><CopyIcon />复制</Tool>
					<Tool $w={63} $gap={4}><RenameIcon />重命名</Tool>
					<ToolSep $mr={3} />
					<span>楼层</span>
					<FloorSelect>首层<Caret $ml={0} /></FloorSelect>
					<ToolSep />
					<Tool $w={61}><SortIcon />排序<Caret $ml={0} /></Tool>
					<Tool $w={58}><FunnelIcon />过滤<Caret $ml={0} /></Tool>
					<ToolSep />
					<Tool $w={136}><CopyFloorIcon />从其他楼层复制构件</Tool>
					<Tool $w={135}><CopyFloorIcon />复制构件到其他楼层</Tool>
					<ToolSep $mr={7} />
					<Tool $w={41}>查找<Caret $ml={0} /></Tool>
					<ToolSep $mr={11} />
					<Tool $w={52} $dim><ArrowUpIcon color="#cfcfcf" />上移</Tool>
					<Tool $w={52}><ArrowDownIcon color="#3b78d8" />下移</Tool>
				</ItemToolbar>
				<Lower>
					<ComponentList />
					<PropPanel>
						<TabStrip>
							<Tab>属性编辑</Tab>
						</TabStrip>
						<PropBody>
							<PropGrid />
							<Preview>
								<PreviewPane>
									<PaneTitle>箍筋图</PaneTitle>
									<CadBox><StirrupTop /></CadBox>
								</PreviewPane>
								<PreviewPane>
									<CadBox><StirrupSection /></CadBox>
								</PreviewPane>
							</Preview>
						</PropBody>
					</PropPanel>
				</Lower>
			</MainArea>
		</Workspace>

		<StatusBar>
			<StatusCell $w={148} />
			<StatusCell $w={78}><Sim>层高:4.5m</Sim></StatusCell>
			<StatusCell $w={98}><Sim>底标高:-0.03m</Sim></StatusCell>
			<StatusCell $w={48}><Sim>0</Sim></StatusCell>
			<StatusCell><Sim>{statusHint}</Sim></StatusCell>
			<StatusCell $w={69}><Sim>349 FPS</Sim></StatusCell>
		</StatusBar>

		<Taskbar>
			<StartButton>
				<Ico s={16}>
					<path d="M0 2.5L7 1.5V7.5H0zM8 1.4L16 0V7.5H8zM0 8.5H7V14.5L0 13.5zM8 8.5H16V16L8 14.6z" fill="#fff" />
				</Ico>
			</StartButton>
			<TaskSearch>
				<CortanaRing />
				在这里输入你要搜索的内容
				<MicSlot>
					<Ico s={16}>
						<path d="M6 1h4v9H6zM3 7c0 6 10 6 10 0M8 12v3M5 15.5h6" fill="none" stroke="#999" />
					</Ico>
				</MicSlot>
			</TaskSearch>
			<TaskApps>
				<TaskApp>{TaskbarIcons.pin}</TaskApp>
				<TaskApp $gap={5}>{TaskbarIcons.swirl}</TaskApp>
				<TaskApp><WinEdge>e</WinEdge></TaskApp>
				<TaskApp>{TaskbarIcons.store}</TaskApp>
				<TaskApp>{TaskbarIcons.explorer}</TaskApp>
				<TaskApp $running>{TaskbarIcons.glodon}</TaskApp>
				<TaskApp $running>{TaskbarIcons.note}</TaskApp>
				<TaskApp $running $active><AppLogo s={24} /></TaskApp>
				<TaskApp $running>{TaskbarIcons.help}</TaskApp>
				<TaskApp $running>{TaskbarIcons.green}</TaskApp>
			</TaskApps>
			<Tray>
				<TraySlot $w={20}>
					<Ico s={14}><path d="M2 9l5-5 5 5" fill="none" stroke="#eee" /></Ico>
				</TraySlot>
				<TraySlot $w={26}>
					<Ico s={18}><path d="M1 7h3v5H1zM5 5h10v8H5z" fill="none" stroke="#eee" /><path d="M7 7h6v4H7z" fill="#eee" /></Ico>
				</TraySlot>
				<TraySlot $w={28}>
					<Ico s={18}><path d="M2 15a13 13 0 0 1 12-12M5 15a9 9 0 0 1 8-8M8 15a5 5 0 0 1 4-4" fill="none" stroke="#bbb" /><circle cx="12" cy="14" r="1.5" fill="#eee" /></Ico>
				</TraySlot>
				<TraySlot $w={20}>
					<Ico s={18}><path d="M2 7h3l5-4v12l-5-4H2zM12 6c1.5 2 1.5 4 0 6M14.5 4c2.5 3 2.5 7 0 10" fill="none" stroke="#ddd" /></Ico>
				</TraySlot>
				<TraySlot $w={34}>
					<Ico s={24}><rect x=".5" y="4.5" width="23" height="15" fill="none" stroke="#eee" /><path d="M3 8h18M3 11h18M6 15h12" stroke="#eee" strokeDasharray="2 1" /></Ico>
				</TraySlot>
				<TraySlot $w={22}>中</TraySlot>
				<TraySlot $w={32}><SogouTile $s={18}>S</SogouTile></TraySlot>
				<Clock>
					10:34
					<br />
					2017/9/29
				</Clock>
				<NoticeSlot>
					<Ico s={18}><path d="M1.5 2.5h15v11h-5l-2 3-2-3h-6z" fill="none" stroke="#eee" /></Ico>
				</NoticeSlot>
			</Tray>
		</Taskbar>

		{/* things floating over the app */}
		<NetPill>
			<NetRates>
				<Ico s={9}><path d="M4.5 1L8 5H5.5v3h-2V5H1z" fill="#e8453c" /></Ico>
				<span>0K/s</span>
				<Ico s={9}><path d="M4.5 8L8 4H5.5V1h-2v3H1z" fill="#2e9c45" /></Ico>
				<span>0K/s</span>
			</NetRates>
			<NetPlus>+</NetPlus>
		</NetPill>
		<NetBall>63%</NetBall>

		<ImeBar>
			<span>中</span>
			<ImePunct>°,</ImePunct>
			<Ico s={16}><path d="M5 1h6v9H5z" fill="#0a78d0" /><path d="M3 7c0 6 10 6 10 0M8 12v3" fill="none" stroke="#0a78d0" strokeWidth="1.5" /></Ico>
			<Ico s={16}><rect x="0" y="3" width="16" height="10" rx="1.5" fill="#0a78d0" /><path d="M2 6h12M2 9h12" stroke="#fff" strokeDasharray="1.5 1" /></Ico>
			<Ico s={16}><circle cx="6" cy="5" r="3" fill="#bcc8d2" /><path d="M1 14c0-6 10-6 10 0z" fill="#bcc8d2" /><rect x="9" y="9" width="7" height="5" fill="#ccd5dc" /></Ico>
			<Ico s={16}><path d="M5 2L1 5l2 3 2-1v7h6V7l2 1 2-3-4-3-3 2z" fill="#0a78d0" /></Ico>
			<Ico s={16}><path d="M14 4l-3 3-2-2 3-3c-3-1-6 1-5 5L1 13l2 2 6-6c4 1 6-2 5-5z" fill="#0a78d0" /></Ico>
		</ImeBar>
		<ImeLogo><SogouTile $s={26}>S</SogouTile></ImeLogo>

		<Ring $x={501} $y={307} $w={272} $h={54} />

		<Dialog>
			<DialogTitle>
				钢筋输入助手-柱箍筋
				<Ico s={11}><path d="M.5.5l10 10M10.5.5l-10 10" stroke="#222" /></Ico>
			</DialogTitle>
			<DialogBody>
				<FormulaBox>C12@100/200+C10@100/200</FormulaBox>
				<PaneGrid>
					<div>
						<PaneLabel><LabelNum>1.</LabelNum>输入格式</PaneLabel>
						<FormatList>
							{formats.map((f, i) => (
								<FormatItem key={f} $on={i === formats.length - 1}>
									<Sim>{f}</Sim>
								</FormatItem>
							))}
							<HScroll>
								<Ico s={9}><path d="M6 1L2.5 4.5 6 8" fill="none" stroke="#555" strokeWidth="1.6" /></Ico>
								<HThumb />
								<Ico s={9}><path d="M3 1l3.5 3.5L3 8" fill="none" stroke="#555" strokeWidth="1.6" /></Ico>
							</HScroll>
						</FormatList>
					</div>
					<div>
						<PaneLabel $pl={9}><LabelNum>2.</LabelNum>输入说明</PaneLabel>
						<DescBox>
							{descLines.map(line => (
								<DescLine key={line}><Sim>{line}</Sim></DescLine>
							))}
						</DescBox>
					</div>
				</PaneGrid>
				<DialogActions>
					<DialogButton $primary>确定</DialogButton>
					<DialogButton>取消</DialogButton>
				</DialogActions>
			</DialogBody>
		</Dialog>

		<Ring $x={854} $y={191} $w={349} $h={52} />
		<Ring $x={1018} $y={243} $w={271} $h={137} />
	</Screen>
)

export default App
